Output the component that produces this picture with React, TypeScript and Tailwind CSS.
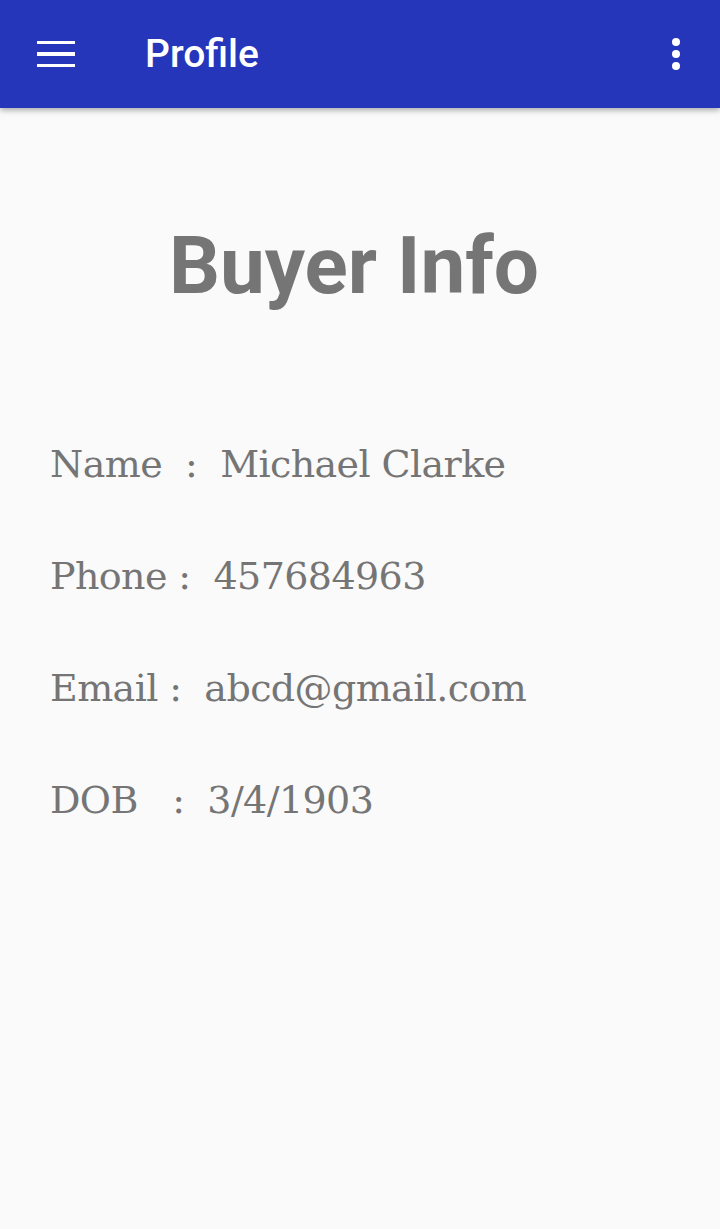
import React from 'react';

const rows = [
  'Name  :  Michael Clarke',
  'Phone :  457684963',
  'Email :  abcd@gmail.com',
  'DOB   :  3/4/1903',
];

const App = () => {
  return (
    <div className="min-h-[1229px] bg-[#fafafa]">
      {/* App bar */}
      <header className="relative z-10 flex h-[108px] items-center bg-[#2636bb] shadow-[0_2px_6px_rgba(0,0,0,0.35)]">
        <button className="ml-[37px] flex w-[38px] flex-col gap-[8px]">
          <span className="block h-[3.5px] bg-white" />
          <span className="block h-[3.5px] bg-white" />
          <span className="block h-[3.5px] bg-white" />
        </button>
        <h1 className="ml-[70px] font-['Roboto',sans-serif] text-[39px] font-medium text-white">Profile</h1>
        <button className="ml-auto mr-[40px] flex flex-col items-center gap-[4px]">
          <span className="block h-[8px] w-[8px] rounded-full bg-white" />
          <span className="block h-[8px] w-[8px] rounded-full bg-white" />
          <span className="block h-[8px] w-[8px] rounded-full bg-white" />
        </button>
      </header>

      <main className="px-[50px]">
        <h2 className="pr-[12px] pt-[118px] text-center font-['Roboto',sans-serif] text-[80px] font-bold leading-none text-[#757575]">
          Buyer Info
        </h2>

        <div className="mt-[130px] flex flex-col gap-[56px]">
          {rows.map((r) => (
            <p
              key={r}
              className="whitespace-pre font-['DejaVu_Serif',serif] text-[38px] leading-[56px] tracking-[-0.6px] text-[#757575]"
            >
              {r}
            </p>
          ))}
        </div>
      </main>
    </div>
  );
};

export default App;
